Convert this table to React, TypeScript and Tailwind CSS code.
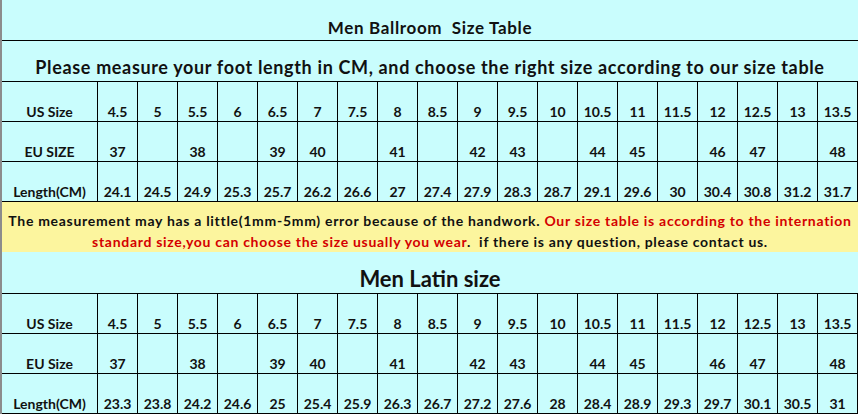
const US = ["4.5", "5", "5.5", "6", "6.5", "7", "7.5", "8", "8.5", "9", "9.5", "10", "10.5", "11", "11.5", "12", "12.5", "13", "13.5"]
const EU = ["37", "", "38", "", "39", "40", "", "41", "", "42", "43", "", "44", "45", "", "46", "47", "", "48"]
const ballroomLength = ["24.1", "24.5", "24.9", "25.3", "25.7", "26.2", "26.6", "27", "27.4", "27.9", "28.3", "28.7", "29.1", "29.6", "30", "30.4", "30.8", "31.2", "31.7"]
const latinLength = ["23.3", "23.8", "24.2", "24.6", "25", "25.4", "25.9", "26.3", "26.7", "27.2", "27.6", "28", "28.4", "28.9", "29.3", "29.7", "30.1", "30.5", "31"]

function Row({ label, values }: { label: string; values: string[] }) {
  return (
    <div className="grid h-10 grid-cols-[95px_repeat(19,40px)] border-r border-b border-black">
      <div className="flex items-end justify-center pb-[2px] leading-none">{label}</div>
      {values.map((v, i) => (
        <div key={i} className="flex items-end justify-center border-l border-black pb-[2px] leading-none">
          {v}
        </div>
      ))}
    </div>
  )
}

function SizeTable({ euLabel, lengths }: { euLabel: string; lengths: string[] }) {
  return (
    <div className="text-[14px] font-bold text-[#111]">
      <Row label="US Size" values={US} />
      <Row label={euLabel} values={EU} />
      <Row label="Length(CM)" values={lengths} />
    </div>
  )
}

export default function App() {
  return (
    <div
      className="h-[414px] w-[858px] overflow-hidden border-l-2 border-[#8c8c8c] bg-[#c9fdfd] text-[#111]"
      style={{ fontFamily: "Lato, 'Open Sans', sans-serif" }}
    >
      <div className="flex h-[41px] items-end justify-center border-b border-black pb-[4px] text-[17px] leading-none font-bold tracking-[0.65px] whitespace-pre">
        Men Ballroom  Size Table
      </div>
      <div className="flex h-[41px] items-end justify-center border-b border-black pb-[5px] text-[18px] leading-none font-bold tracking-[0.65px] whitespace-nowrap">
        Please measure your foot length in CM, and choose the right size according to our size table
      </div>
      <SizeTable euLabel="EU SIZE" lengths={ballroomLength} />
      <div className="flex h-[50px] flex-col items-center bg-[#fcf59e] pt-[8px] text-[14px] leading-[21px] font-bold tracking-[0.7px] whitespace-pre">
        <div>
          The measurement may has a little(1mm-5mm) error because of the handwork.{" "}
          <span className="text-[#d40000]">Our size table is according to the internation</span>
        </div>
        <div>
          <span className="text-[#d40000]">standard size,you can choose the size usually you wear</span>
          .  if there is any question, please contact us.
        </div>
      </div>
      <div className="flex h-[42px] items-end justify-center border-b border-black pb-[3px] text-[22px] leading-none font-bold">
        Men Latin size
      </div>
      <SizeTable euLabel="EU Size" lengths={latinLength} />
    </div>
  )
}
